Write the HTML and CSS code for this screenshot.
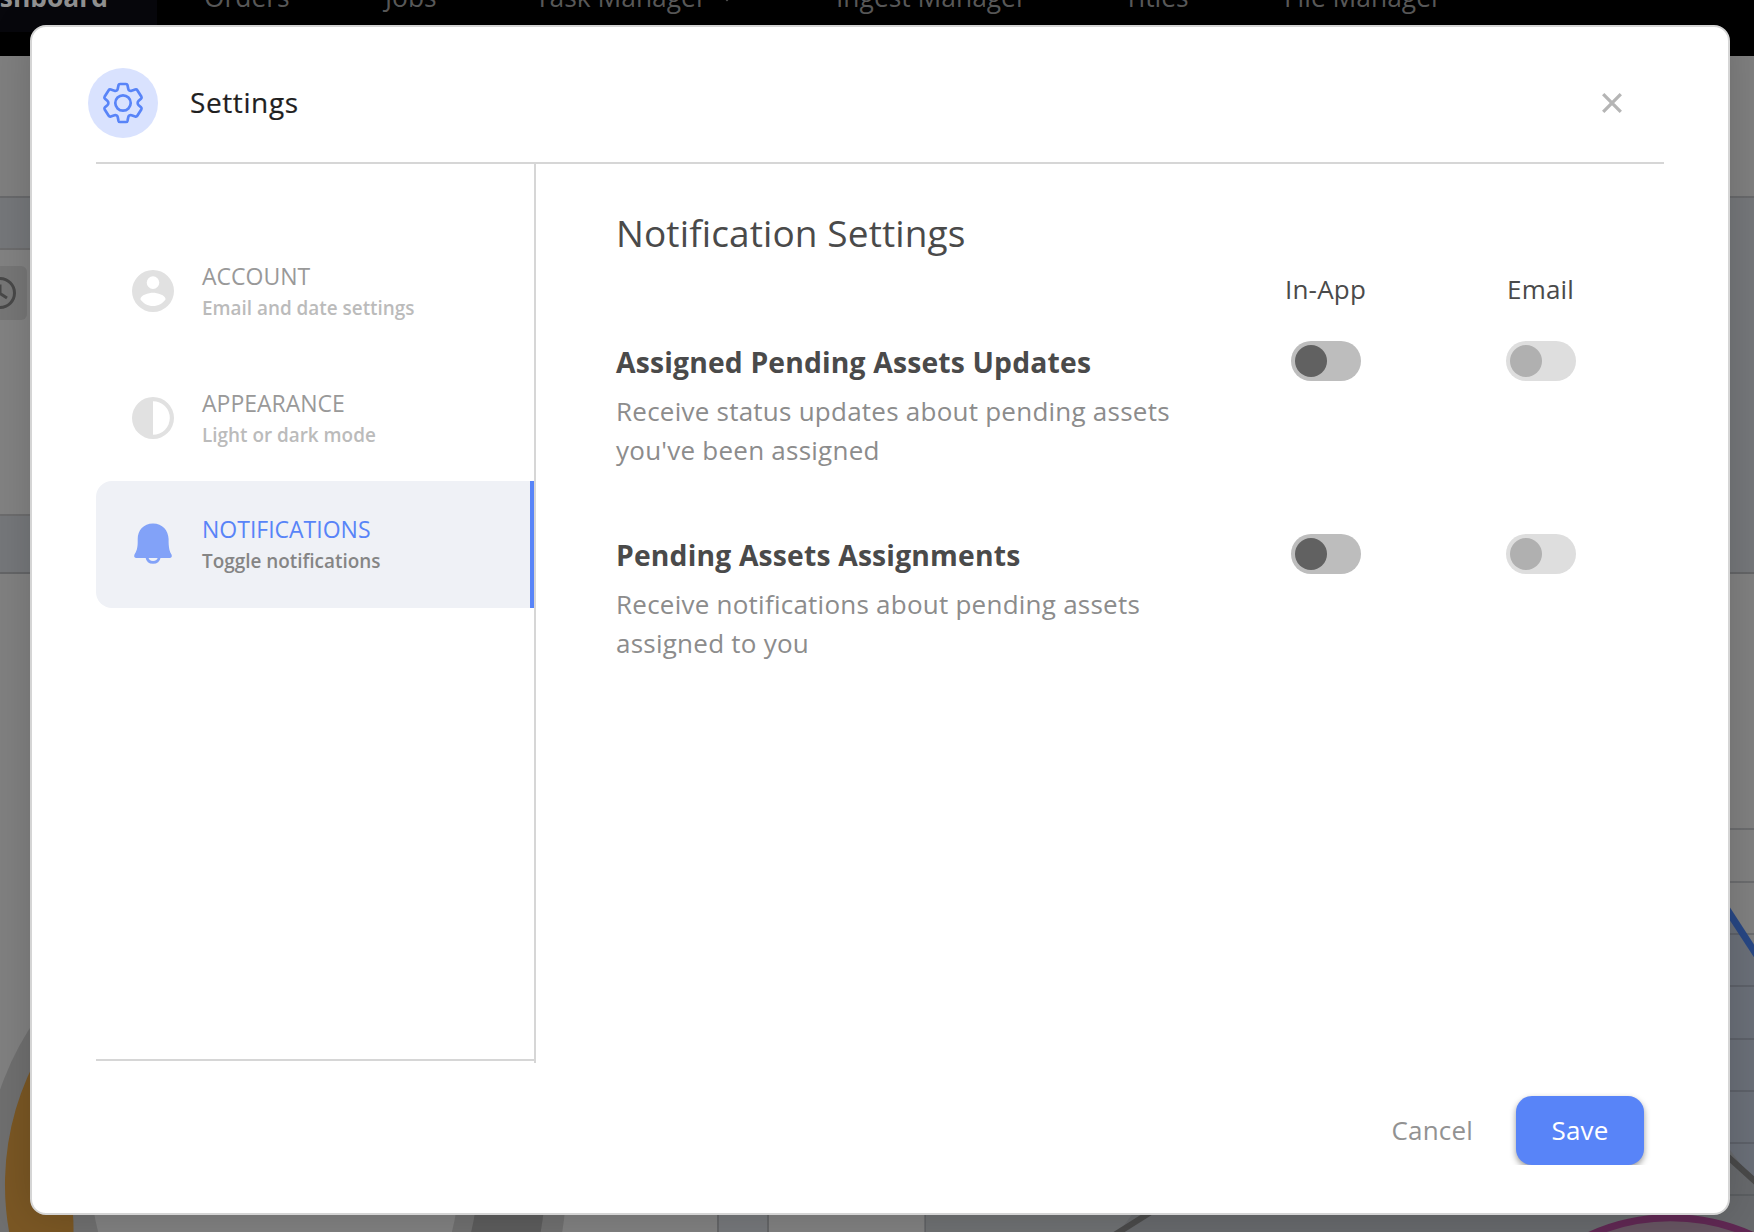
FILE: index.html
```html
<!DOCTYPE html>
<html lang="en">
<head>
<meta charset="utf-8">
<title>Settings</title>
<link rel="stylesheet" href="styles.css">
</head>
<body>
<div class="page">
  <nav class="topbar">
    <a class="tab tab-active"><span>Dashboard</span></a>
    <a class="tab tab-orders">Orders</a>
    <a class="tab tab-jobs">Jobs</a>
    <a class="tab tab-task">Task Manager</a>
    <svg class="caret" width="12" height="8" viewBox="0 0 12 8"><path d="M0 0L6 6L12 0" fill="none" stroke="#555" stroke-width="2"/></svg>
    <a class="tab tab-ingest">Ingest Manager</a>
    <a class="tab tab-titles">Titles</a>
    <a class="tab tab-file">File Manager</a>
  </nav>
  <div class="subbar"></div>
  <div class="filters">
    <div class="filter-card"><div class="clock">
      <svg width="36" height="36" viewBox="0 0 36 36" fill="none" stroke="#484848" stroke-width="3"><circle cx="18" cy="18" r="14.5"/><path d="M18 9.500V18.500L25 23"/></svg>
    </div></div>
  </div>
  <div class="charts">
    <div class="chart-card chart-left">
      <svg width="717" height="658" viewBox="0 574 717 658">
        <circle cx="275" cy="1185" r="237" fill="none" stroke="#6f6f6f" stroke-width="108"/>
        <path d="M12 1246A270 270 0 0 1 86 992L133 1040A204 204 0 0 0 73 1215Q74 1226 73 1246Z" fill="#7a5724"/>
        <path d="M511 1185A236 236 0 0 1 500 1255" fill="none" stroke="#5c5c5c" stroke-width="68"/>
      </svg>
    </div>
    <div class="chart-card chart-right">
      <svg width="985" height="658" viewBox="769 574 985 658">
        <path d="M1400 1232V1000L1700 870L1730 912L1754 950V1232Z" fill="#6a6f78"/>
        <path d="M925 1232V1195H1400V1232Z" fill="#6e7072"/>
        <path d="M1119 1232L1180 1150H1730L1754 1182V1232Z" fill="#67696c"/>
        <path d="M925 574V1232M925 829H1754M925 882H1754M925 934H1754M925 986H1754M925 1039H1754M925 1091H1754M925 1143H1754M925 1195H1754" stroke="#4c4d52" stroke-opacity=".4" stroke-width="2" fill="none"/>
        <path d="M1700 868L1730 914L1760 960" fill="none" stroke="#284784" stroke-width="7"/>
        <path d="M1100 1244L1170 1200M1715 1145L1758 1184" fill="none" stroke="#4a4a4a" stroke-width="6"/>
        <path d="M1584 1238C1637 1211 1704 1211 1758 1238" fill="#675562" stroke="#602853" stroke-width="7"/>
      </svg>
    </div>
  </div>
</div>

<div class="modal">
  <header class="modal-header">
    <span class="gear">
      <svg width="42" height="42" viewBox="0 0 42 42" fill="none" stroke="#5884f8" stroke-width="2.700" stroke-linejoin="round">
        <path d="M18 2H24C24.900 2 25.300 2.400 25.500 3.200L26.300 7C26.600 8.500 28 9.300 29.500 8.800L33.200 7.500C34.200 7.200 34.800 7.400 35.300 8.200L39.300 14.500C39.800 15.400 39.700 16 39 16.700L36.700 18.700C35.300 20 35.300 22 36.700 23.300L39 25.300C39.700 26 39.800 26.600 39.300 27.500L35.300 33.800C34.800 34.600 34.200 34.800 33.200 34.500L29.500 33.200C28 32.700 26.600 33.500 26.300 35L25.500 38.800C25.300 39.600 24.900 40 24 40H18C17.100 40 16.700 39.600 16.500 38.800L15.700 35C15.400 33.500 14 32.700 12.500 33.200L8.800 34.500C7.800 34.800 7.200 34.600 6.700 33.800L2.700 27.500C2.200 26.600 2.300 26 3 25.300L5.300 23.300C6.700 22 6.700 20 5.300 18.700L3 16.700C2.300 16 2.200 15.400 2.700 14.500L6.700 8.200C7.200 7.400 7.800 7.200 8.800 7.500L12.500 8.800C14 9.300 15.400 8.500 15.700 7L16.500 3.200C16.700 2.400 17.100 2 18 2Z"/>
        <circle cx="21" cy="21" r="7.700"/>
      </svg>
    </span>
    <h1 class="modal-title">Settings</h1>
    <svg class="close" width="20" height="20" viewBox="0 0 20 20"><path d="M1.200 1.200L18.800 18.800M18.800 1.200L1.200 18.800" stroke="#b5b5b5" stroke-width="3.300"/></svg>
  </header>
  <div class="modal-body">
    <aside class="side">
      <div class="item">
        <svg class="item-icon" width="42" height="42" viewBox="0 0 42 42"><path fill="#e1e1e1" fill-rule="evenodd" d="M21 0a21 21 0 1 0 0 42a21 21 0 0 0 0-42ZM21 6.300a6.300 6.300 0 1 1 0 12.600a6.300 6.300 0 0 1 0-12.600ZM21 36.100c-5.250 0-9.900-2.700-12.600-6.750c.06-4.200 8.400-6.500 12.600-6.500s12.540 2.300 12.600 6.500c-2.700 4.050-7.350 6.750-12.600 6.750Z"/></svg>
        <div class="item-text"><div class="item-name">ACCOUNT</div><div class="item-note">Email and date settings</div></div>
      </div>
      <div class="item">
        <svg class="item-icon" width="42" height="42" viewBox="0 0 42 42"><path fill="#e1e1e1" fill-rule="evenodd" d="M21 0a21 21 0 1 0 0 42a21 21 0 0 0 0-42ZM21 4.200a16.800 16.800 0 0 1 0 33.600Z"/></svg>
        <div class="item-text"><div class="item-name">APPEARANCE</div><div class="item-note">Light or dark mode</div></div>
      </div>
      <div class="item item-on">
        <svg class="item-icon" width="42" height="42" viewBox="0 0 42 42"><path fill="#82a2f8" d="M21 .500C11.500 .500 5.700 7.500 5.700 16V19C5.700 25 4.500 28.500 2.500 31.500C1.600 33.500 2.500 35 4.500 35H37.500C39.500 35 40.400 33.500 39.500 31.500C37.500 28.500 36.800 25 36.600 19V16C36.300 7.500 30.500 .500 21 .500Z"/><path d="M15 34.500C16 41 26 41 27.200 34.500" fill="none" stroke="#82a2f8" stroke-width="2.800"/></svg>
        <div class="item-text"><div class="item-name">NOTIFICATIONS</div><div class="item-note">Toggle notifications</div></div>
      </div>
    </aside>
    <main class="content">
      <h2 class="heading">Notification Settings</h2>
      <div class="cols"><span class="col-app">In-App</span><span>Email</span></div>
      <section class="row">
        <div class="copy"><h3>Assigned Pending Assets Updates</h3><p>Receive status updates about pending assets<br>you've been assigned</p></div>
        <span class="switch"></span><span class="switch switch-off"></span>
      </section>
      <section class="row">
        <div class="copy"><h3>Pending Assets Assignments</h3><p>Receive notifications about pending assets<br>assigned to you</p></div>
        <span class="switch"></span><span class="switch switch-off"></span>
      </section>
    </main>
  </div>
  <footer class="modal-footer"><a class="cancel">Cancel</a><div class="save-wrap"><button class="save">Save</button></div></footer>
</div>
</body>
</html>
```
FILE: styles.css
```css
* { box-sizing: border-box; }
body { margin: 0; width: 1754px; height: 1232px; overflow: hidden; position: relative; font-family: "Open Sans", "Noto Sans", sans-serif; background: #75777a; }
h1, h2, h3, p { margin: 0; }
svg { display: block; }

.page { height: 1232px; overflow: hidden; display: flex; flex-direction: column; }
.topbar { height: 56px; background: #000; display: flex; align-items: flex-start; flex: none; color: #5a5a5a; font-size: 26.400px; line-height: 32px; overflow: hidden; }
.tab { display: block; white-space: nowrap; flex: none; margin-top: -19px; }
.tab-active { width: 157px; height: 51px; background: #07070c; border-radius: 0 0 6px 0; color: #929292; font-weight: 700; display: flex; justify-content: flex-end; padding-right: 49px; }
.tab-orders { margin-left: 47px; width: 86px; }
.tab-jobs { margin-left: 95px; width: 54px; }
.tab-task { margin-left: 96px; width: 168px; }
.caret { margin: -6px 0 0 18px; flex: none; }
.tab-ingest { margin-left: 103px; width: 190px; }
.tab-titles { margin-left: 98px; width: 62px; }
.tab-file { margin-left: 98px; }
.subbar { height: 142px; flex: none; background: #7f7f7f; border-bottom: 2px solid #68696b; }
.filters { height: 376px; flex: none; border-bottom: 2px solid #646567; padding-top: 50px; }
.filter-card { width: 718px; height: 268px; background: #828282; border: solid #6c6c6d; border-width: 2px 0; padding-top: 16px; }
.clock { width: 27px; height: 54px; background: #767676; border-radius: 0 6px 6px 0; overflow: hidden; display: flex; align-items: center; justify-content: flex-end; padding-right: 9px; }
.clock svg { flex: none; }
.charts { flex: none; height: 658px; display: flex; justify-content: space-between; }
.chart-card { background: #808080; overflow: hidden; }
.chart-left { width: 719px; border-right: 2px solid #646567; }
.chart-right { width: 987px; border-left: 2px solid #646567; }

.modal { position: absolute; left: 30px; top: 25px; width: 1700px; height: 1190px; background: #fff; border: 2px solid #d5d5d5; border-radius: 16px; box-shadow: 0 0 40px rgba(0,0,0,.16); padding: 0 64px; display: flex; flex-direction: column; }
.modal-header { height: 137px; flex: none; display: flex; align-items: center; border-bottom: 2px solid #d6d6d6; padding: 17px 42px 0 0; }
.gear { width: 70px; height: 70px; margin-left: -8px; border-radius: 50%; background: #d9e2fe; display: flex; align-items: center; justify-content: center; }
.modal-title { font-size: 28px; line-height: 38px; font-weight: 400; color: #1f1f1f; margin: -2px 0 0 32px; letter-spacing: .6px; -webkit-text-stroke: .2px #1f1f1f; }
.close { margin-left: auto; }
.modal-body { height: 899px; flex: none; display: flex; }
.side { width: 440px; height: 899px; border-right: 2px solid #d6d6d6; padding-top: 63.500px; background: linear-gradient(#d6d6d6, #d6d6d6) 0 895px / 100% 2px no-repeat; }
.item { height: 126.700px; display: flex; align-items: center; padding-left: 36px; gap: 28px; }
.item-icon { flex: none; }
.item-text { padding-top: 4px; }
.item-on .item-text { padding-top: 2px; }
.item-name { font-size: 23px; line-height: 31px; color: #999; }
.item-note { font-size: 18.900px; line-height: 32px; font-weight: 600; color: #bbb; }
.item-on { background: #eff1f6; border-right: 4px solid #5884f8; border-radius: 16px 0 0 16px; }
.item-on .item-name { color: #5884f8; }
.item-on .item-note { color: #858585; }
.content { padding: 44px 0 0 80px; flex: 1; }
.heading { font-size: 37px; line-height: 50px; font-weight: 400; color: #4a4a4a; letter-spacing: .12px; }
.cols { display: flex; height: 36px; margin: 13px 0 1px; padding-left: 669px; font-size: 26px; line-height: 36px; color: #4a4a4a; letter-spacing: .2px; }
.col-app { width: 222px; }
.row { display: flex; height: 193px; padding-top: 33px; }
.copy { width: 675px; margin-top: 1px; }
.copy h3 { font-size: 28.300px; line-height: 40px; font-weight: 700; color: #4a4a4a; letter-spacing: .17px; white-space: nowrap; }
.copy p { font-size: 26px; line-height: 39px; color: #8c8c8c; margin-top: 10px; letter-spacing: .24px; }
.switch { width: 70px; height: 40px; border-radius: 20px; background: #bdbdbd; padding: 4px; margin-right: 145px; flex: none; }
.switch::before { content: ""; display: block; width: 32px; height: 32px; border-radius: 50%; background: #616161; }
.switch-off { background: #dedede; margin-right: 0; }
.switch-off::before { background: #b0b0b0; }
.modal-footer { display: flex; justify-content: flex-end; padding: 23px 10px 0 0; height: 102px; flex: none; font-size: 26px; letter-spacing: .2px; }
.cancel { color: #929292; line-height: 69px; margin: 10px 33px 0 0; }
.save-wrap { padding: 10px; height: 79px; overflow: hidden; }
.save { display: block; width: 128px; height: 69px; border: 0; border-radius: 16px; background: #5884f8; color: #fff; font: 400 26px/69px "Open Sans", sans-serif; letter-spacing: .2px; padding: 0; box-shadow: 0 3px 6px rgba(0,0,0,.4); }
```
